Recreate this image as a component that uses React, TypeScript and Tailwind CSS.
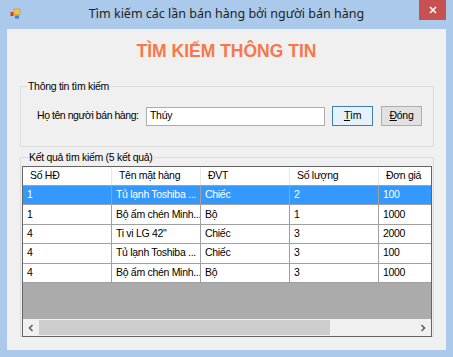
import React from 'react';

type Row = { hd: string; ten: string; dvt: string; sl: string; gia: string };

const rows: Row[] = [
  { hd: '1', ten: 'Tủ lạnh Toshiba ...', dvt: 'Chiếc', sl: '2', gia: '100' },
  { hd: '1', ten: 'Bộ ấm chén Minh...', dvt: 'Bộ', sl: '1', gia: '1000' },
  { hd: '4', ten: 'Ti vi LG 42"', dvt: 'Chiếc', sl: '3', gia: '2000' },
  { hd: '4', ten: 'Tủ lạnh Toshiba ...', dvt: 'Chiếc', sl: '3', gia: '100' },
  { hd: '4', ten: 'Bộ ấm chén Minh...', dvt: 'Bộ', sl: '3', gia: '1000' },
];

const headers = ['Số HĐ', 'Tên mặt hàng', 'ĐVT', 'Số lượng', 'Đơn giá'];

const AppIcon = () => (
  <svg width="12" height="12" viewBox="0 0 12 12">
    <rect x="0.5" y="4" width="3" height="4" fill="#d23a2a" />
    <rect x="4" y="1" width="6" height="5.5" fill="#f4c430" stroke="#c79a1c" strokeWidth="0.6" />
    <rect x="5" y="7.5" width="4" height="3" fill="#4a7fd0" />
  </svg>
);

const Chevron = ({ dir }: { dir: 'left' | 'right' }) => (
  <svg width="6" height="8" viewBox="0 0 6 8">
    <polyline
      points={dir === 'left' ? '4.5,1 1.5,4 4.5,7' : '1.5,1 4.5,4 1.5,7'}
      fill="none"
      stroke="#606060"
      strokeWidth="1.6"
    />
  </svg>
);

const Cell: React.FC<{ children: React.ReactNode; selected: boolean; last?: boolean }> = ({ children, selected, last }) => (
  <div
    className={`h-full pl-[4px] flex items-center whitespace-nowrap overflow-hidden border-b border-[#a0a0a0] ${
      last ? '' : 'border-r'
    } ${selected ? 'bg-[#3399ff] text-white' : 'bg-white text-black'}`}
  >
    {children}
  </div>
);

export default function App() {
  return (
    <div className="w-[453px] h-[357px] bg-[#abc9ea] flex flex-col font-['Liberation_Sans',Arial,sans-serif] text-[10.5px] tracking-[-0.3px] text-black">
      {/* title bar */}
      <div className="h-[29px] grid grid-cols-[1fr_auto_1fr] tracking-normal">
        <div className="pl-[10px] pt-[8px]">
          <AppIcon />
        </div>
        <div className="pt-[5px] font-['Noto_Sans',sans-serif] text-[12.5px] text-[#1e1e1e]">
          Tìm kiếm các lần bán hàng bởi người bán hàng
        </div>
        <div className="flex justify-end pr-[7px]">
          <div className="w-[27px] h-[20px] bg-[#c75050] flex items-center justify-center">
            <svg width="8" height="8" viewBox="0 0 8 8">
              <path d="M1 1 L7 7 M7 1 L1 7" stroke="white" strokeWidth="1.6" />
            </svg>
          </div>
        </div>
      </div>

      {/* client area */}
      <div className="mx-[7px] h-[321px] bg-[#f0f0f0] px-[13px] flex flex-col">
        <h1 className="pt-[12px] h-[51px] text-center font-bold text-[17.5px] leading-[21px] tracking-normal text-[#f6784a]">
          TÌM KIẾM THÔNG TIN
        </h1>

        <fieldset className="border border-[#dcdcdc] h-[67px] ml-0 mr-[-1px] px-[8px]">
          <legend className="px-[1px] ml-[-2px] leading-[13px]">Thông tin tìm kiếm</legend>
          <div className="flex items-center mt-[13px] pl-[8px]">
            <span className="w-[109px] whitespace-nowrap tracking-[-0.45px]">Họ tên người bán hàng:</span>
            <div className="w-[179px] h-[19px] bg-white border border-[#abadb3] flex items-center pl-[3px]">
              Thúy
            </div>
            <button className="ml-[7px] w-[41px] h-[20px] border border-[#3c7fb1] bg-[#e5f1fb] flex items-center justify-center">
              <span><span className="underline">T</span>ìm</span>
            </button>
            <button className="ml-[8px] w-[41px] h-[20px] border border-[#adadad] bg-[#e1e1e1] flex items-center justify-center">
              <span><span className="underline">Đ</span>óng</span>
            </button>
          </div>
        </fieldset>

        <fieldset className="mt-[4px] border border-[#dcdcdc] h-[186px] mr-[-1px] px-[1px]">
          <legend className="px-[1px] ml-[6px] leading-[13px]">Kết quả tìm kiếm (5 kết quả)</legend>
          <div className="mt-[2px] w-[410px] h-[171px] border border-[#646464] bg-[#ababab] flex flex-col overflow-hidden">
            <div className="grid grid-cols-[89px_89px_89px_89px_89px] h-[19px] bg-white border-b border-[#a0a0a0] shrink-0">
              {headers.map((h, i) => (
                <div
                  key={h}
                  className={`pl-[7px] flex items-center whitespace-nowrap ${i < 4 ? 'border-r border-[#e8e8e8]' : ''}`}
                >
                  {h}
                </div>
              ))}
            </div>
            {rows.map((r, i) => {
              const sel = i === 0;
              return (
                <div key={i} className="grid grid-cols-[89px_89px_89px_89px_89px] h-[19.4px] shrink-0">
                  <Cell selected={sel}>{r.hd}</Cell>
                  <Cell selected={sel}>{r.ten}</Cell>
                  <Cell selected={sel}>{r.dvt}</Cell>
                  <Cell selected={sel}>{r.sl}</Cell>
                  <Cell selected={sel} last>{r.gia}</Cell>
                </div>
              );
            })}
            <div className="flex-1" />
            {/* horizontal scrollbar */}
            <div className="h-[17px] bg-[#f0f0f0] flex items-center shrink-0">
              <div className="w-[15px] h-full flex items-center justify-center">
                <Chevron dir="left" />
              </div>
              <div className="w-[291px] h-[15px] bg-[#cdcdcd] ml-[1px]" />
              <div className="flex-1" />
              <div className="w-[17px] h-full flex items-center justify-center">
                <Chevron dir="right" />
              </div>
            </div>
          </div>
        </fieldset>
      </div>
    </div>
  );
}
